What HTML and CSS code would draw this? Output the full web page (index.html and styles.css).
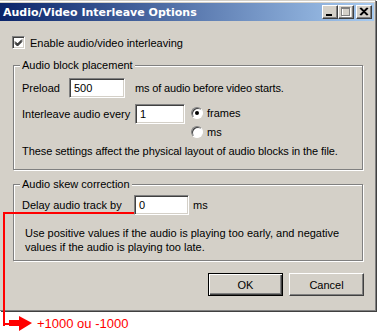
FILE: index.html
```html
<!DOCTYPE html>
<html>
<head>
<meta charset="utf-8">
<link rel="stylesheet" href="styles.css">
</head>
<body>
<div class="window">
  <div class="titlebar">
    <span class="title">Audio/Video Interleave Options</span>
    <div class="tbtns">
      <span class="tbtn"><svg width="14" height="12" viewBox="0 0 14 12"><rect x="3" y="8" width="6" height="2" fill="#000"/></svg></span>
      <span class="tbtn"><svg width="14" height="12" viewBox="0 0 14 12"><rect x="3.5" y="2.5" width="8" height="8" fill="none" stroke="#fff"/><rect x="2.5" y="1.5" width="8" height="8" fill="none" stroke="#808080"/><rect x="2" y="1" width="9" height="2" fill="#808080"/></svg></span>
      <span class="tbtn close"><svg width="14" height="12" viewBox="0 0 14 12"><path d="M3 2 L10 9 M10 2 L3 9 M4 2 L11 9 M11 2 L4 9" stroke="#000" stroke-width="1.2"/></svg></span>
    </div>
  </div>
  <div class="body">
    <label class="check-row">
      <span class="checkbox"><svg width="9" height="9" viewBox="0 0 9 9"><path d="M1 3.5 L3.5 6 L8 1.5 M1 4.5 L3.5 7 L8 2.5 M1 5.5 L3.5 8 L8 3.5" stroke="#000" stroke-width="1" fill="none"/></svg></span>
      <span>Enable audio/video interleaving</span>
    </label>

    <div class="group g1">
      <span class="legend">Audio block placement</span>
      <div class="row preload">
        <span class="lbl w-preload">Preload</span>
        <span class="input in-preload">500</span>
        <span class="after">ms of audio before video starts.</span>
      </div>
      <div class="row interleave">
        <span class="lbl w-inter">Interleave audio every</span>
        <span class="input in-inter">1</span>
        <div class="radios">
          <div class="radio-row"><span class="radio on"></span><span>frames</span></div>
          <div class="radio-row"><span class="radio"></span><span>ms</span></div>
        </div>
      </div>
      <p class="note">These settings affect the physical layout of audio blocks in the file.</p>
    </div>

    <div class="group g2">
      <span class="legend">Audio skew correction</span>
      <div class="row delay">
        <span class="lbl w-delay">Delay audio track by</span>
        <span class="input in-delay">0</span>
        <span class="after ms">ms</span>
      </div>
      <p class="para">Use positive values if the audio is playing too early, and negative<br>values if the audio is playing too late.</p>
    </div>

    <div class="buttons">
      <span class="btn default"><span class="btn-in">OK</span></span>
      <span class="btn"><span class="btn-in">Cancel</span></span>
    </div>
  </div>
</div>

<svg class="annot" width="379" height="332" viewBox="0 0 379 332">
  <rect x="3" y="212" width="131" height="2" fill="#ff0000"/>
  <rect x="3" y="212" width="2" height="114" fill="#ff0000"/>
  <rect x="3" y="323" width="10" height="2" fill="#ff0000"/>
  <rect x="9" y="320" width="12" height="6" fill="#ff0000"/>
  <polygon points="19,316 32,323 19,331" fill="#ff0000"/>
</svg>
<span class="annot-text">+1000 ou -1000</span>
</body>
</html>
```

FILE: styles.css
```css
html, body {
  margin: 0;
  padding: 0;
  background: #ffffff;
}
body {
  width: 379px;
  height: 332px;
  position: relative;
  overflow: hidden;
  font-family: "Liberation Sans", Arial, sans-serif;
  font-size: 11px;
  color: #000;
}
.window {
  width: 375px;
  height: 307px;
  background: #d4d0c8;
  border-top: 1px solid #d4d0c8;
  border-right: 1px solid #808080;
  border-bottom: 1px solid #808080;
  box-shadow: 1px 1px 0 #404040, inset 0 1px 0 #ffffff;
  padding-top: 2px;
  box-sizing: content-box;
}
.titlebar {
  height: 18px;
  width: 374px;
  background: linear-gradient(to right, #0a246a, #a6caf0);
  display: flex;
  align-items: center;
  justify-content: space-between;
}
.title {
  color: #fff;
  font-weight: bold;
  font-size: 11px;
  padding-left: 3px;
  font-family: "DejaVu Sans", sans-serif;
}
.tbtns {
  display: flex;
  padding-right: 2px;
}
.tbtn {
  width: 16px;
  height: 14px;
  box-sizing: border-box;
  background: #d4d0c8;
  border-top: 1px solid #fff;
  border-left: 1px solid #fff;
  border-right: 1px solid #404040;
  border-bottom: 1px solid #404040;
  box-shadow: inset -1px -1px 0 #808080;
  display: flex;
  align-items: center;
  justify-content: center;
}
.tbtn.close { margin-left: 2px; }
.tbtn svg { display: block; }

.body {
  padding: 0 0 0 13px;
}
.check-row {
  display: flex;
  align-items: center;
  margin-top: 15px;
  margin-left: -1px;
  height: 13px;
}
.checkbox {
  width: 13px;
  height: 13px;
  box-sizing: border-box;
  background: #fff;
  border-top: 1px solid #808080;
  border-left: 1px solid #808080;
  border-right: 1px solid #fff;
  border-bottom: 1px solid #fff;
  box-shadow: inset 1px 1px 0 #404040, inset -1px -1px 0 #d4d0c8;
  display: flex;
  align-items: center;
  justify-content: center;
  margin-right: 5px;
}
.group {
  position: relative;
  width: 350px;
  border: 1px solid #808080;
  box-shadow: inset 1px 1px 0 #fff, 1px 1px 0 #fff;
  box-sizing: border-box;
}
.g1 {
  margin-top: 16px;
  height: 105px;
  padding: 12px 0 0 8px;
}
.g2 {
  margin-top: 14px;
  height: 77px;
  padding: 10px 0 0 8px;
}
.legend {
  position: absolute;
  top: -7px;
  left: 6px;
  padding: 0 2px;
  background: #d4d0c8;
  line-height: 13px;
}
.row {
  display: flex;
  align-items: flex-start;
}
.lbl {
  line-height: 20px;
}
.w-preload { width: 47px; }
.w-inter { width: 113px; }
.w-delay { width: 112px; }
.input {
  height: 20px;
  box-sizing: border-box;
  background: #fff;
  border-top: 1px solid #808080;
  border-left: 1px solid #808080;
  border-right: 1px solid #fff;
  border-bottom: 1px solid #fff;
  box-shadow: inset 1px 1px 0 #404040, inset -1px -1px 0 #d4d0c8;
  padding-left: 4px;
  line-height: 18px;
}
.in-preload { width: 56px; }
.in-inter { width: 50px; }
.in-delay { width: 55px; }
.after {
  line-height: 20px;
  margin-left: 10px;
  letter-spacing: -0.15px;
}
.after.ms { margin-left: 4px; letter-spacing: 0; }
.preload { height: 20px; }
.interleave {
  margin-top: 6px;
  height: 36px;
}
.radios {
  margin-left: 6px;
  margin-top: 2px;
}
.radio-row {
  display: flex;
  align-items: center;
  height: 13px;
  margin-bottom: 6px;
}
.radio {
  width: 12px;
  height: 12px;
  border-radius: 50%;
  box-sizing: border-box;
  background: #fff;
  border: 1px solid;
  border-color: #808080 #fff #fff #808080;
  box-shadow: inset 1px 1px 0 #404040;
  margin-right: 4px;
  position: relative;
}
.radio.on::after {
  content: "";
  position: absolute;
  left: 3px;
  top: 3px;
  width: 4px;
  height: 4px;
  border-radius: 50%;
  background: #000;
}
.note {
  margin: 5px 0 0 0;
  line-height: 13px;
  letter-spacing: -0.08px;
}
.para {
  margin: 11px 0 0 3px;
  line-height: 14px;
}
.buttons {
  display: flex;
  justify-content: flex-end;
  gap: 6px;
  width: 351px;
  margin-top: 12px;
}
.btn {
  width: 75px;
  height: 23px;
  box-sizing: border-box;
  background: #d4d0c8;
  border-top: 1px solid #fff;
  border-left: 1px solid #fff;
  border-right: 1px solid #404040;
  border-bottom: 1px solid #404040;
  box-shadow: inset -1px -1px 0 #808080;
  display: flex;
  align-items: center;
  justify-content: center;
}
.btn.default {
  border: 1px solid #000;
  box-shadow: inset 1px 1px 0 #fff, inset -1px -1px 0 #404040, inset -2px -2px 0 #808080;
}
.annot {
  position: absolute;
  left: 0;
  top: 0;
  pointer-events: none;
}
.annot-text {
  position: absolute;
  left: 37px;
  top: 316px;
  color: #ff0000;
  font-family: "Liberation Sans", Arial, sans-serif;
  font-size: 13px;
  line-height: 15px;
}
```
